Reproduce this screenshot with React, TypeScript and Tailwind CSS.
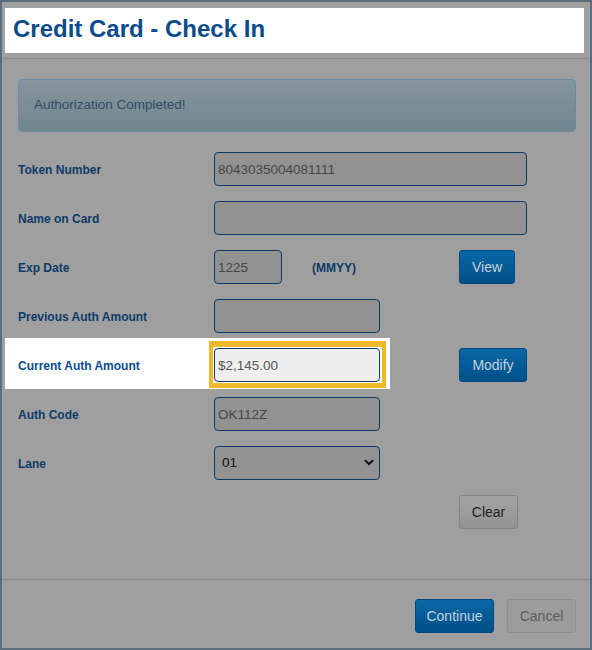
import React from "react";

const inputCls =
  "h-[34px] rounded-[4px] border border-[#0b3a6b] bg-[#929292] px-[3px] text-[13.5px] text-[#474747] outline-none";

function Label({ children, active }: { children: React.ReactNode; active?: boolean }) {
  return (
    <div
      className={
        "relative flex items-center pt-px text-[12px] font-bold " +
        (active ? "text-[#0a4d8e]" : "text-[#0e3b68]")
      }
    >
      {children}
    </div>
  );
}

export default function App() {
  return (
    <div
      className="w-[592px] h-[650px] border-2 border-[#5b6d7c] bg-[#9f9f9f] flex flex-col"
      style={{ fontFamily: '"Liberation Sans", Arial, sans-serif' }}
    >
      {/* Header */}
      <div className="pt-[6px] pl-[3px] pr-[6px] pb-[5px] border-b border-[#8c8c8c]">
        <div className="h-[45px] bg-white pl-[8px] pt-[9px] text-[24px] leading-[24px] font-bold text-[#0a4b8c]">
          Credit Card - Check In
        </div>
      </div>

      {/* Body */}
      <div className="flex-1 pl-[16px] pr-[14px] pt-[20px]">
        <div className="h-[53px] rounded-[4px] border border-[#6c8ba3] bg-gradient-to-b from-[#87959d] to-[#71868f] pl-[15px] flex items-center text-[13.5px] text-[#2e4e66]">
          Authorization Completed!
        </div>

        <div className="mt-[20px] flex flex-col gap-[15px]">
          {/* Token Number */}
          <div className="grid grid-cols-[196px_245px_1fr] h-[34px]">
            <Label>Token Number</Label>
            <input readOnly value="8043035004081111" className={inputCls + " col-span-2 w-[313px]"} />
          </div>

          {/* Name on Card */}
          <div className="grid grid-cols-[196px_245px_1fr] h-[34px]">
            <Label>Name on Card</Label>
            <input readOnly value="" className={inputCls + " col-span-2 w-[313px]"} />
          </div>

          {/* Exp Date */}
          <div className="grid grid-cols-[196px_245px_1fr] h-[34px]">
            <Label>Exp Date</Label>
            <div className="flex items-center">
              <input readOnly value="1225" className={inputCls + " w-[68px]"} />
              <span className="ml-[30px] pt-px text-[12px] font-bold text-[#0e3b68]">(MMYY)</span>
            </div>
            <div>
              <button className="h-[34px] w-[56px] rounded-[3px] border border-[#014a82] bg-gradient-to-b from-[#0a68a6] to-[#004f88] text-[14px] text-[#c6d2de]">
                View
              </button>
            </div>
          </div>

          {/* Previous Auth Amount */}
          <div className="grid grid-cols-[196px_245px_1fr] h-[34px]">
            <Label>Previous Auth Amount</Label>
            <input readOnly value="" className={inputCls + " w-[166px]"} />
          </div>

          {/* Current Auth Amount (highlighted) */}
          <div className="relative grid grid-cols-[196px_245px_1fr] h-[34px]">
            <div className="absolute -left-[13px] -top-[10px] w-[385px] h-[51px] bg-white" />
            <Label active>Current Auth Amount</Label>
            <div className="relative w-[166px] h-[34px]">
              <div className="absolute -left-[5px] -top-[7px] -right-[6px] -bottom-[6px] border-[#efb82a] border-l-[4px] border-r-[4px] border-t-[6px] border-b-[5px]" />
              <input
                readOnly
                value="$2,145.00"
                className="relative h-[34px] w-[166px] rounded-[4px] border border-[#0b3a6b] bg-[#eeeeee] px-[3px] text-[13.5px] text-[#555555] outline-none"
              />
            </div>
            <div>
              <button className="h-[34px] w-[68px] rounded-[3px] border border-[#014a82] bg-gradient-to-b from-[#0a68a6] to-[#004f88] text-[14px] text-[#c6d2de]">
                Modify
              </button>
            </div>
          </div>

          {/* Auth Code */}
          <div className="grid grid-cols-[196px_245px_1fr] h-[34px]">
            <Label>Auth Code</Label>
            <input readOnly value="OK112Z" className={inputCls + " w-[166px]"} />
          </div>

          {/* Lane */}
          <div className="grid grid-cols-[196px_245px_1fr] h-[34px]">
            <Label>Lane</Label>
            <div className="relative w-[166px] h-[34px]">
              <select
                defaultValue="01"
                className="appearance-none w-full h-[34px] rounded-[4px] border border-[#0b3a6b] bg-[#929292] pl-[7px] text-[13.5px] text-[#111111] outline-none"
              >
                <option value="01">01</option>
              </select>
              <svg
                className="pointer-events-none absolute right-[6px] top-[13px]"
                width="10"
                height="7"
                viewBox="0 0 10 7"
              >
                <path d="M1 1.2 L5 5.2 L9 1.2" fill="none" stroke="#111" strokeWidth="2" />
              </svg>
            </div>
          </div>

          {/* Clear */}
          <div className="grid grid-cols-[196px_245px_1fr] h-[34px]">
            <div />
            <div />
            <div>
              <button className="h-[34px] w-[59px] rounded-[3px] border border-[#858585] bg-gradient-to-b from-[#a4a4a4] to-[#939393] text-[14px] text-[#222222]">
                Clear
              </button>
            </div>
          </div>
        </div>
      </div>

      {/* Footer */}
      <div className="border-t border-[#8c8c8c] pt-[19px] pb-[15px] pr-[14px] flex justify-end gap-[13px]">
        <button className="h-[34px] w-[79px] rounded-[3px] border border-[#014a82] bg-gradient-to-b from-[#0a68a6] to-[#004f88] text-[14px] text-[#c6d2de]">
          Continue
        </button>
        <button className="h-[34px] w-[69px] rounded-[3px] border border-[#8e8e8e] bg-[#9c9c9c] text-[14px] text-[#5c5c5c]">
          Cancel
        </button>
      </div>
    </div>
  );
}
